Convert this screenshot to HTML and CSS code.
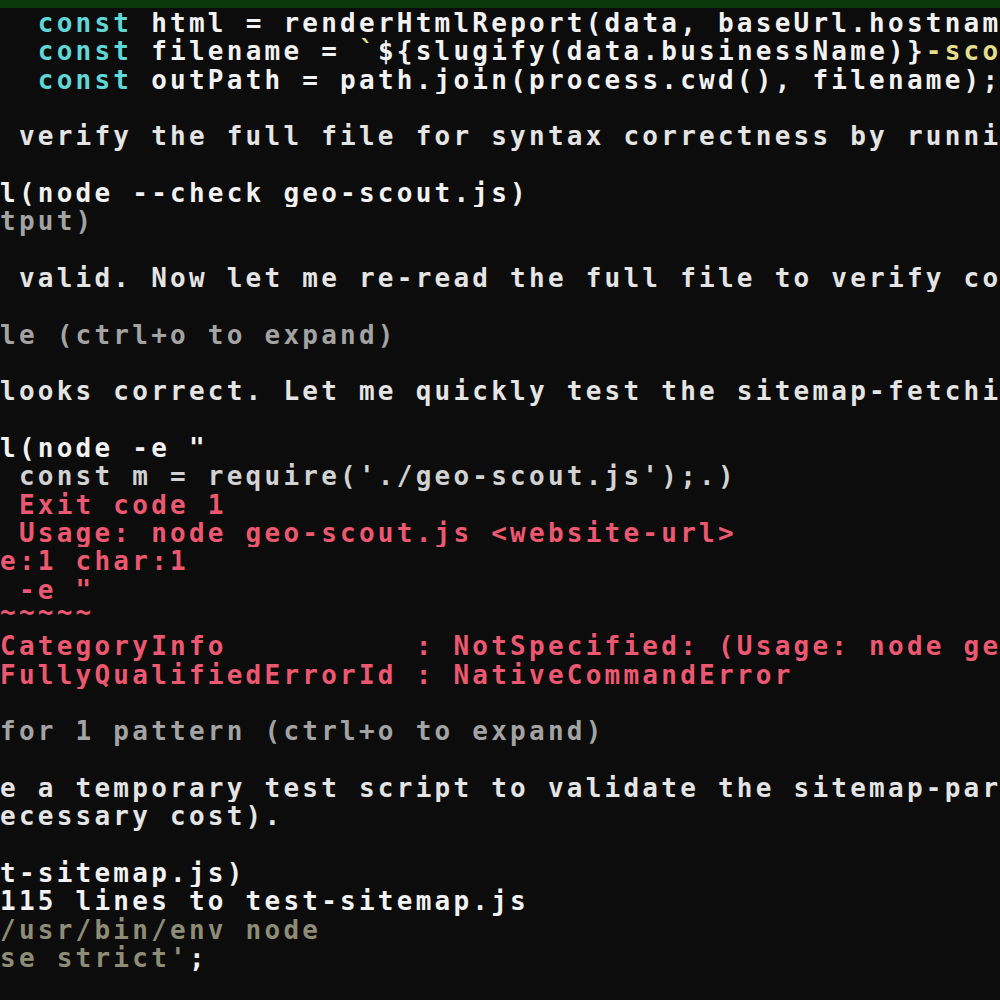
FILE: index.html
```html
<!DOCTYPE html>
<html lang="en">
<head>
<meta charset="utf-8">
<title>Terminal</title>
<link rel="stylesheet" href="styles.css">
</head>
<body>
<div class="topbar"></div>
<div class="term">
<div class="line"><span class="cy">  const</span> html = renderHtmlReport(data, baseUrl.hostnam</div>
<div class="line"><span class="cy">  const</span> filename = <span class="yl">`</span>${slugify(data.businessName)}<span class="yl">-sco</span></div>
<div class="line"><span class="cy">  const</span> outPath = path.join(process.cwd(), filename);</div>
<div class="line"></div>
<div class="line prose"> verify the full file for syntax correctness by runni</div>
<div class="line"></div>
<div class="line">l(node --check geo-scout.js)</div>
<div class="line dim">tput)</div>
<div class="line"></div>
<div class="line prose"> valid. Now let me re-read the full file to verify co</div>
<div class="line"></div>
<div class="line dim">le (ctrl+o to expand)</div>
<div class="line"></div>
<div class="line prose">looks correct. Let me quickly test the sitemap-fetchi</div>
<div class="line"></div>
<div class="line">l(node -e "</div>
<div class="line soft"> const m = require('./geo-scout.js');.)</div>
<div class="line err"> Exit code 1</div>
<div class="line err"> Usage: node geo-scout.js &lt;website-url&gt;</div>
<div class="line err">e:1 char:1</div>
<div class="line err"> -e "</div>
<div class="line err tilde">~~~~~</div>
<div class="line err">CategoryInfo          : NotSpecified: (Usage: node ge</div>
<div class="line err">FullyQualifiedErrorId : NativeCommandError</div>
<div class="line"></div>
<div class="line dim">for 1 pattern (ctrl+o to expand)</div>
<div class="line"></div>
<div class="line prose">e a temporary test script to validate the sitemap-par</div>
<div class="line prose">ecessary cost).</div>
<div class="line"></div>
<div class="line">t-sitemap.js)</div>
<div class="line">115 lines to test-sitemap.js</div>
<div class="line olive">/usr/bin/env node</div>
<div class="line olive">se strict'<span class="wh">;</span></div>
</div>
</body>
</html>
```

FILE: styles.css
```css
html, body {
  margin: 0;
  padding: 0;
  background: #0c0c0c;
  width: 1000px;
  height: 1000px;
  overflow: hidden;
}

.topbar {
  height: 8px;
  background: #0a3a0b;
}

.term {
  padding-top: 1px;
  font-family: "DejaVu Sans Mono", "Liberation Mono", monospace;
  font-weight: bold;
  font-size: 26px;
  letter-spacing: 3.24px;
  color: #f2f2f2;
}

.line {
  height: 28.333px;
  line-height: 28.333px;
  white-space: pre;
  overflow: hidden;
}

.cy { color: #61d6d6; }
.yl { color: #e5dd8c; }
.prose { color: #e4e4e4; }
.soft { color: #d2d2d2; }
.dim { color: #a3a3a3; }
.err { color: #ec5870; }
.olive { color: #8e8c76; }
.wh { color: #f2f2f2; }

.tilde {
  line-height: 16px;
  overflow: visible;
}
```
